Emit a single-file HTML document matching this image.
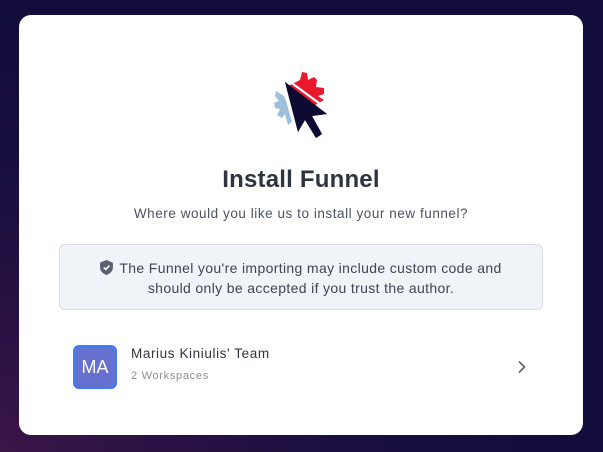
<!DOCTYPE html>
<html><head><style>
html,body{margin:0;padding:0}
body{width:603px;height:452px;overflow:hidden;background:radial-gradient(ellipse at 0% 100%,#3a1548 0%,#1a0f3f 40%,#120c3a 70%),#120c3a;font-family:"Liberation Sans",sans-serif;position:relative}
.card{position:absolute;left:19px;top:15px;width:564px;height:420px;background:#fff;border-radius:12px}
h1{position:absolute;left:0;right:0;top:151px;margin:0;text-align:center;font-size:24px;font-weight:bold;color:#2e3440;letter-spacing:0.2px}
.sub{position:absolute;left:0;right:0;top:191px;text-align:center;font-size:13.5px;letter-spacing:0.55px;color:#4b5262}
.alert{position:absolute;left:40px;top:229px;width:484px;height:66px;background:#f0f3f7;border:1px solid #d8dee6;border-radius:6px;box-sizing:border-box;text-align:center;font-size:14px;letter-spacing:0.35px;line-height:20px;color:#3e4553;padding-top:13px}
.av{position:absolute;left:54px;top:330px;width:44px;height:44px;box-sizing:border-box;border:2px solid #3a7cf2;border-radius:6px;background:#6671cf;color:#fff;font-size:18px;text-align:center;line-height:40px}
.name{position:absolute;left:112px;top:331px;font-size:13.5px;letter-spacing:0.6px;color:#2e3440}
.ws{position:absolute;left:112px;top:355px;font-size:11px;letter-spacing:0.7px;color:#8a909a}
</style></head><body>
<div class="card">
<svg style="position:absolute;left:241px;top:55px" width="80" height="70" viewBox="0 0 80 70">
<polygon points="36,12 40,10 42,2 47,3 48,10 54,7 57,10 56,17 64,18 64,24 58,26 64,30 50,38 28,16" fill="#e8192c"/>
<polygon points="24,26 16,21 15,26 19,31 14,33 15,38 20,39 17,45 22,48 25,44 28,55 34,50" fill="#9dc1dc"/>
<polygon points="25,12 67,44 52,46 62,64 56,68 45,50 38,62" fill="#0e0b33"/>
<line x1="29" y1="11" x2="67" y2="39" stroke="#fff" stroke-width="2.2"/>
<line x1="23" y1="16" x2="36" y2="62" stroke="#fff" stroke-width="2.2"/>
<polygon points="25,12 67,44 52,46 62,64 56,68 45,50 38,62" fill="#0e0b33"/>
</svg>
<h1>Install Funnel</h1>
<div class="sub">Where would you like us to install your new funnel?</div>
<div class="alert"><svg width="13" height="15" viewBox="0 0 12 14" style="vertical-align:-2px;margin-right:6px"><path d="M6 0L12 2.5V7C12 10.5 9 13 6 14C3 13 0 10.5 0 7V2.5Z" fill="#5a6170"/><path d="M3.5 7L5.3 8.8L8.7 5.2" stroke="#fff" stroke-width="1.6" fill="none"/></svg>The Funnel you're importing may include custom code and<br>should only be accepted if you trust the author.</div>
<div class="av">MA</div>
<div class="name">Marius Kiniulis' Team</div>
<div class="ws">2 Workspaces</div>
<svg style="position:absolute;left:497px;top:345px" width="12" height="14" viewBox="0 0 12 14"><path d="M3 1.5L8.5 7L3 12.5" stroke="#5b6270" stroke-width="1.6" fill="none"/></svg>
</div>
</body></html>
